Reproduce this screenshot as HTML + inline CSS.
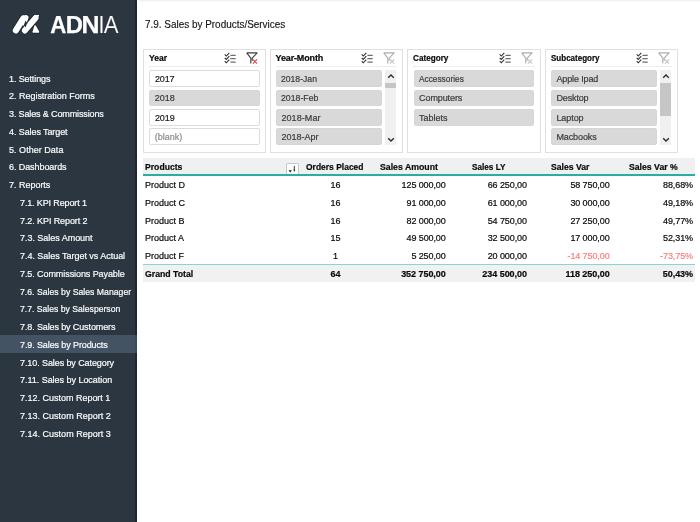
<!DOCTYPE html>
<html lang="en">
<head>
<meta charset="utf-8">
<title>7.9. Sales by Products/Services</title>
<style>
*{box-sizing:border-box;margin:0;padding:0}
html,body{width:700px;height:522px;overflow:hidden;background:#fff}
body{position:relative;font-family:"Liberation Sans",sans-serif;font-size:9px;color:#222}
#wrap{position:absolute;left:0;top:0;width:700px;height:522px;overflow:hidden;will-change:transform}
#topshade{position:absolute;left:138.5px;top:0;width:561.5px;height:2px;background:linear-gradient(#f1f1f1 40%,#ffffff)}
#side{position:absolute;left:0;top:0;width:137px;height:522px;background:#2b3640}
#sel{position:absolute;left:0;top:335.2px;width:137px;height:17.5px;background:#435364}
#logo{position:absolute;left:0;top:0}
#edge{position:absolute;left:135px;top:0;width:2px;height:522px;background:#1f2832}
#edge2{position:absolute;left:135px;top:335.2px;width:2px;height:17.5px;background:#3a4a5c}
.t{position:absolute;white-space:nowrap;height:17px;line-height:17px;font-size:9px;color:#0a0a0a;-webkit-text-stroke:0.2px currentColor}
.nav{color:#fbfcfd;-webkit-text-stroke:0.2px #fbfcfd}
.ttl{font-size:10.8px;height:20px;line-height:20px;color:#151515;-webkit-text-stroke:0.15px #151515}
.b{font-weight:bold;color:#0a0a0a}
.r{text-align:right}
.ctr{text-align:center}
.neg{color:#f57f7f}
.slicer{position:absolute;top:49px;height:103.5px;border:1px solid #e0e0e0;background:#fff}
.sep{position:absolute;top:66.3px;height:1px;background:#ededed}
.it{position:absolute;height:16.7px;border-radius:2px;background:#d9d9d9;border:1px solid #d6d6d6}
.it.off,.it.none{background:#fff;border:1px solid #dcdcdc}
.si{color:#3a3a3a}
.si.off{color:#1a1a1a}
.si.none{color:#8c8c8c}
.ico{position:absolute}
.sb{position:absolute;top:70px;width:11.5px;height:75px;background:#f0f0f0}
.th{position:absolute;width:11.5px;background:#c6c6c6}
#thead{position:absolute;left:143px;top:157.7px;width:552px;height:17.5px;background:#f0f0f0}
#tline{position:absolute;left:143px;top:174.4px;width:552px;height:1.6px;background:#25b0a2}
#total{position:absolute;left:143px;top:264.8px;width:552px;height:17.2px;background:#f1f1f1}
#totline{position:absolute;left:143px;top:264.2px;width:552px;height:1px;background:#8ad4d4}
#fbtn{position:absolute;left:286.3px;top:163px;width:12.3px;height:11.3px;border:1px solid #c4c8ce;border-bottom:none;background:#fdfdfd;border-radius:1.5px 1.5px 0 0}
#fbtn svg{position:absolute;left:0;top:0}
</style>
</head>
<body>
<div id="wrap">
<div id="topshade"></div>
<div id="side"></div><div id="sel"></div><div id="edge"></div><div id="edge2"></div>
<svg id="logo" width="137" height="50" viewBox="0 0 137 50">
<g fill="none" stroke-linecap="round" stroke-linejoin="round">
<path d="M15.9 30.4 L23.2 18.6" stroke="#1a232c" stroke-width="7.6"/>
<path d="M23.2 16.6 L26.6 16.2 Q27.8 16.6 27.4 17.8 L25.6 22.5 L23.6 24.5 Z" fill="#1a232c" stroke="#1a232c" stroke-width="3.6"/>
<path d="M15.9 30.4 L23.2 18.6" stroke="#ffffff" stroke-width="6.2"/>
<path d="M23.2 16.6 L26.6 16.2 Q27.8 16.6 27.4 17.8 L25.6 22.5 L23.6 24.5 Z" fill="#ffffff" stroke="#ffffff" stroke-width="2.2"/>
<path d="M24.8 30.5 L35.6 18" stroke="#1a232c" stroke-width="7.5"/>
<path d="M34 17 L38.3 15.5 L36.5 19 Z" fill="#1a232c" stroke="#1a232c" stroke-width="3"/>
<path d="M35.1 26 L38.5 32 L33.2 32 Z" fill="#1a232c" stroke="#1a232c" stroke-width="3"/>
<path d="M35.1 26 L38.5 32 L33.2 32 Z" fill="#ffffff" stroke="#ffffff" stroke-width="1.6"/>
<path d="M24.8 30.5 L35.6 18" stroke="#ffffff" stroke-width="5.9"/>
<path d="M34 17 L38.3 15.5 L36.5 19 Z" fill="#ffffff" stroke="#ffffff" stroke-width="1.6"/>
<path d="M25.6 20.5 L27.1 23.3 L25.4 27.6 L24.2 24.2 Z" fill="#1f2932"/>
</g>
<g font-family="Liberation Sans, sans-serif" font-size="23.2" fill="#ffffff">
<g font-weight="bold" stroke="#ffffff" stroke-width="0.25">
<text x="50.2" y="32.8" textLength="16.1" lengthAdjust="spacingAndGlyphs">A</text>
<text x="65.7" y="32.8" textLength="17.2" lengthAdjust="spacingAndGlyphs">D</text>
<text x="81.6" y="32.8" textLength="18" lengthAdjust="spacingAndGlyphs">N</text>
</g>
<text x="98.3" y="32.8" stroke="#2b3640" stroke-width="0.15">I</text>
<text x="103.8" y="32.8" stroke="#2b3640" stroke-width="0.15" textLength="14.8" lengthAdjust="spacingAndGlyphs">A</text>
</g>
</svg>
<div class="slicer" style="left:143px;width:123px"></div>
<div class="sep" style="left:149px;width:111px"></div>
<div class="it off" style="left:149px;top:70px;width:110.5px"></div>
<div class="it " style="left:149px;top:89.5px;width:110.5px"></div>
<div class="it off" style="left:149px;top:109px;width:110.5px"></div>
<div class="it none" style="left:149px;top:128.3px;width:110.5px"></div>
<svg class="ico" style="left:223.7px;top:52px" width="13" height="12" viewBox="0 0 13 12"><g fill="none" stroke="#2c2c2c" stroke-width="1.05"><path d="M0.7 2.4L2.3 4.0L5.3 0.8"/><path d="M0.7 5.8L2.3 7.4L5.3 4.2"/><path d="M0.7 9.2L2.3 10.8L5.3 7.6"/><path d="M6.4 3.3H11.7M6.4 6.7H11.7M6.4 10.1H11.7" stroke="#6c6c6c" stroke-width="1.3"/></g></svg>
<svg class="ico" style="left:245.5px;top:52px" width="14" height="13" viewBox="0 0 14 13"><g fill="none"><path d="M0.7 0.9H11.1L6.2 6.1V8.8M0.7 0.9L4.8 6.1V11.5" stroke="#3c3c3c" stroke-width="1.1" stroke-linejoin="round"/><path d="M6.9 7.4L11.1 11.6M11.1 7.4L6.9 11.6" stroke="#f03c3c" stroke-width="1.05"/></g></svg>
<div class="slicer" style="left:270px;width:133px"></div>
<div class="sep" style="left:276px;width:121px"></div>
<div class="it " style="left:276px;top:70px;width:106px"></div>
<div class="it " style="left:276px;top:89.5px;width:106px"></div>
<div class="it " style="left:276px;top:109px;width:106px"></div>
<div class="it " style="left:276px;top:128.3px;width:106px"></div>
<svg class="ico" style="left:361.0px;top:52px" width="13" height="12" viewBox="0 0 13 12"><g fill="none" stroke="#2c2c2c" stroke-width="1.05"><path d="M0.7 2.4L2.3 4.0L5.3 0.8"/><path d="M0.7 5.8L2.3 7.4L5.3 4.2"/><path d="M0.7 9.2L2.3 10.8L5.3 7.6"/><path d="M6.4 3.3H11.7M6.4 6.7H11.7M6.4 10.1H11.7" stroke="#6c6c6c" stroke-width="1.3"/></g></svg>
<svg class="ico" style="left:382.8px;top:52px" width="14" height="13" viewBox="0 0 14 13"><g fill="none"><path d="M0.7 0.9H11.1L6.2 6.1V8.8M0.7 0.9L4.8 6.1V11.5" stroke="#acacac" stroke-width="1.1" stroke-linejoin="round"/><path d="M6.9 7.4L11.1 11.6M11.1 7.4L6.9 11.6" stroke="#c2c2c2" stroke-width="1.05"/></g></svg>
<div class="sb" style="left:384.7px"></div><div class="th" style="left:384.7px;top:82.9px;height:5.6px"></div>
<svg class="ico" style="left:386.7px;top:73px" width="8" height="6" viewBox="0 0 8 6"><path d="M1.2 4.8L4 2L6.8 4.8" fill="none" stroke="#2a2a2a" stroke-width="1.3"/></svg>
<svg class="ico" style="left:386.7px;top:137px" width="8" height="6" viewBox="0 0 8 6"><path d="M1.2 1.2L4 4L6.8 1.2" fill="none" stroke="#2a2a2a" stroke-width="1.3"/></svg>
<div class="slicer" style="left:407px;width:134px"></div>
<div class="sep" style="left:413px;width:122px"></div>
<div class="it " style="left:413.8px;top:70px;width:120.4px"></div>
<div class="it " style="left:413.8px;top:89.5px;width:120.4px"></div>
<div class="it " style="left:413.8px;top:109px;width:120.4px"></div>
<svg class="ico" style="left:498.7px;top:52px" width="13" height="12" viewBox="0 0 13 12"><g fill="none" stroke="#2c2c2c" stroke-width="1.05"><path d="M0.7 2.4L2.3 4.0L5.3 0.8"/><path d="M0.7 5.8L2.3 7.4L5.3 4.2"/><path d="M0.7 9.2L2.3 10.8L5.3 7.6"/><path d="M6.4 3.3H11.7M6.4 6.7H11.7M6.4 10.1H11.7" stroke="#6c6c6c" stroke-width="1.3"/></g></svg>
<svg class="ico" style="left:520.5px;top:52px" width="14" height="13" viewBox="0 0 14 13"><g fill="none"><path d="M0.7 0.9H11.1L6.2 6.1V8.8M0.7 0.9L4.8 6.1V11.5" stroke="#acacac" stroke-width="1.1" stroke-linejoin="round"/><path d="M6.9 7.4L11.1 11.6M11.1 7.4L6.9 11.6" stroke="#c2c2c2" stroke-width="1.05"/></g></svg>
<div class="slicer" style="left:545px;width:133px"></div>
<div class="sep" style="left:551px;width:121px"></div>
<div class="it " style="left:551px;top:70px;width:106px"></div>
<div class="it " style="left:551px;top:89.5px;width:106px"></div>
<div class="it " style="left:551px;top:109px;width:106px"></div>
<div class="it " style="left:551px;top:128.3px;width:106px"></div>
<svg class="ico" style="left:636.0px;top:52px" width="13" height="12" viewBox="0 0 13 12"><g fill="none" stroke="#2c2c2c" stroke-width="1.05"><path d="M0.7 2.4L2.3 4.0L5.3 0.8"/><path d="M0.7 5.8L2.3 7.4L5.3 4.2"/><path d="M0.7 9.2L2.3 10.8L5.3 7.6"/><path d="M6.4 3.3H11.7M6.4 6.7H11.7M6.4 10.1H11.7" stroke="#6c6c6c" stroke-width="1.3"/></g></svg>
<svg class="ico" style="left:657.8px;top:52px" width="14" height="13" viewBox="0 0 14 13"><g fill="none"><path d="M0.7 0.9H11.1L6.2 6.1V8.8M0.7 0.9L4.8 6.1V11.5" stroke="#acacac" stroke-width="1.1" stroke-linejoin="round"/><path d="M6.9 7.4L11.1 11.6M11.1 7.4L6.9 11.6" stroke="#c2c2c2" stroke-width="1.05"/></g></svg>
<div class="sb" style="left:659.7px"></div><div class="th" style="left:659.7px;top:83px;height:33px"></div>
<svg class="ico" style="left:661.7px;top:73px" width="8" height="6" viewBox="0 0 8 6"><path d="M1.2 4.8L4 2L6.8 4.8" fill="none" stroke="#2a2a2a" stroke-width="1.3"/></svg>
<svg class="ico" style="left:661.7px;top:137px" width="8" height="6" viewBox="0 0 8 6"><path d="M1.2 1.2L4 4L6.8 1.2" fill="none" stroke="#2a2a2a" stroke-width="1.3"/></svg>
<div id="thead"></div><div id="tline"></div><div id="total"></div><div id="totline"></div>
<div id="fbtn"><svg width="11" height="11" viewBox="0 0 11 11"><path d="M1.5 6.2H4.9L3.2 8.4Z" fill="#222"/><path d="M7.3 1.9V7.4" stroke="#222" stroke-width="0.9" fill="none"/><path d="M6.5 5.6H8.1L7.3 7.6Z" fill="#222"/></svg></div>
<div id="n0" class="t nav" style="left:9px;top:71px;letter-spacing:-0.11px">1. Settings</div>
<div id="n1" class="t nav" style="left:9px;top:88px;letter-spacing:-0.02px">2. Registration Forms</div>
<div id="n2" class="t nav" style="left:9px;top:106px;letter-spacing:-0.13px">3. Sales &amp; Commissions</div>
<div id="n3" class="t nav" style="left:9px;top:124px;letter-spacing:-0.09px">4. Sales Target</div>
<div id="n4" class="t nav" style="left:9px;top:142px;letter-spacing:0.03px">5. Other Data</div>
<div id="n5" class="t nav" style="left:9px;top:159px;letter-spacing:-0.08px">6. Dashboards</div>
<div id="n6" class="t nav" style="left:9px;top:177px;letter-spacing:-0.02px">7. Reports</div>
<div id="n7" class="t nav" style="left:20px;top:195px;letter-spacing:-0.13px">7.1. KPI Report 1</div>
<div id="n8" class="t nav" style="left:20px;top:213px;letter-spacing:-0.09px">7.2. KPI Report 2</div>
<div id="n9" class="t nav" style="left:20px;top:230px;letter-spacing:-0.03px">7.3. Sales Amount</div>
<div id="n10" class="t nav" style="left:20px;top:248px;letter-spacing:-0.03px">7.4. Sales Target vs Actual</div>
<div id="n11" class="t nav" style="left:20px;top:266px;letter-spacing:-0.08px">7.5. Commissions Payable</div>
<div id="n12" class="t nav" style="left:20px;top:284px;transform:scaleX(0.966);transform-origin:0 50%">7.6. Sales by Sales Manager</div>
<div id="n13" class="t nav" style="left:20px;top:301px;transform:scaleX(0.959);transform-origin:0 50%">7.7. Sales by Salesperson</div>
<div id="n14" class="t nav" style="left:20px;top:319px;letter-spacing:-0.12px">7.8. Sales by Customers</div>
<div id="n15" class="t nav" style="left:20px;top:337px;letter-spacing:-0.11px">7.9. Sales by Products</div>
<div id="n16" class="t nav" style="left:20px;top:355px;letter-spacing:-0.09px">7.10. Sales by Category</div>
<div id="n17" class="t nav" style="left:20px;top:372px;letter-spacing:-0.03px">7.11. Sales by Location</div>
<div id="n18" class="t nav" style="left:20px;top:390px;letter-spacing:-0.01px">7.12. Custom Report 1</div>
<div id="n19" class="t nav" style="left:20px;top:408px;letter-spacing:0.01px">7.13. Custom Report 2</div>
<div id="n20" class="t nav" style="left:20px;top:426px;letter-spacing:0.01px">7.14. Custom Report 3</div>
<div id="title" class="t ttl" style="left:145.2px;top:14px;transform:scaleX(0.920);transform-origin:0 50%">7.9. Sales by Products/Services</div>
<div id="h0" class="t b" style="left:145.1px;top:159px;transform:scaleX(0.959);transform-origin:0 50%">Products</div>
<div id="h1" class="t b" style="left:306.1px;top:159px;transform:scaleX(0.942);transform-origin:0 50%">Orders Placed</div>
<div id="h2" class="t b" style="left:380.2px;top:159px;transform:scaleX(0.970);transform-origin:0 50%">Sales Amount</div>
<div id="h3" class="t b" style="left:472.2px;top:159px;transform:scaleX(0.910);transform-origin:0 50%">Sales LY</div>
<div id="h4" class="t b" style="left:551.0px;top:159px;transform:scaleX(0.959);transform-origin:0 50%">Sales Var</div>
<div id="h5" class="t b" style="left:629.1px;top:159px;transform:scaleX(0.965);transform-origin:0 50%">Sales Var %</div>
<div id="r0c0" class="t" style="left:145.1px;top:177px">Product D</div>
<div id="r0c1" class="t ctr" style="left:295.4px;width:80px;top:177px">16</div>
<div id="r0c2" class="t r num" style="right:254.3px;top:177px;letter-spacing:-0.09px">125 000,00</div>
<div id="r0c3" class="t r num" style="right:173.1px;top:177px;letter-spacing:-0.09px">66 250,00</div>
<div id="r0c4" class="t r num" style="right:90.4px;top:177px;letter-spacing:-0.09px">58 750,00</div>
<div id="r0c5" class="t r num" style="right:7.0px;top:177px;letter-spacing:-0.09px">88,68%</div>
<div id="r1c0" class="t" style="left:145.1px;top:195px">Product C</div>
<div id="r1c1" class="t ctr" style="left:295.4px;width:80px;top:195px">16</div>
<div id="r1c2" class="t r num" style="right:254.3px;top:195px;letter-spacing:-0.09px">91 000,00</div>
<div id="r1c3" class="t r num" style="right:173.1px;top:195px;letter-spacing:-0.09px">61 000,00</div>
<div id="r1c4" class="t r num" style="right:90.4px;top:195px;letter-spacing:-0.09px">30 000,00</div>
<div id="r1c5" class="t r num" style="right:7.0px;top:195px;letter-spacing:-0.09px">49,18%</div>
<div id="r2c0" class="t" style="left:145.1px;top:213px">Product B</div>
<div id="r2c1" class="t ctr" style="left:295.4px;width:80px;top:213px">16</div>
<div id="r2c2" class="t r num" style="right:254.3px;top:213px;letter-spacing:-0.09px">82 000,00</div>
<div id="r2c3" class="t r num" style="right:173.1px;top:213px;letter-spacing:-0.09px">54 750,00</div>
<div id="r2c4" class="t r num" style="right:90.4px;top:213px;letter-spacing:-0.09px">27 250,00</div>
<div id="r2c5" class="t r num" style="right:7.0px;top:213px;letter-spacing:-0.09px">49,77%</div>
<div id="r3c0" class="t" style="left:145.1px;top:230px">Product A</div>
<div id="r3c1" class="t ctr" style="left:295.4px;width:80px;top:230px">15</div>
<div id="r3c2" class="t r num" style="right:254.3px;top:230px;letter-spacing:-0.09px">49 500,00</div>
<div id="r3c3" class="t r num" style="right:173.1px;top:230px;letter-spacing:-0.09px">32 500,00</div>
<div id="r3c4" class="t r num" style="right:90.4px;top:230px;letter-spacing:-0.09px">17 000,00</div>
<div id="r3c5" class="t r num" style="right:7.0px;top:230px;letter-spacing:-0.09px">52,31%</div>
<div id="r4c0" class="t" style="left:145.1px;top:248px">Product F</div>
<div id="r4c1" class="t ctr" style="left:295.4px;width:80px;top:248px">1</div>
<div id="r4c2" class="t r num" style="right:254.3px;top:248px;letter-spacing:-0.09px">5 250,00</div>
<div id="r4c3" class="t r num" style="right:173.1px;top:248px;letter-spacing:-0.09px">20 000,00</div>
<div id="r4c4" class="t r num neg" style="right:90.4px;top:248px;letter-spacing:-0.09px">-14 750,00</div>
<div id="r4c5" class="t r num neg" style="right:7.0px;top:248px;letter-spacing:-0.09px">-73,75%</div>
<div id="r5c0" class="t b" style="left:145.1px;top:266px;transform:scaleX(0.969);transform-origin:0 50%">Grand Total</div>
<div id="r5c1" class="t ctr b" style="left:295.4px;width:80px;top:266px">64</div>
<div id="r5c2" class="t r num b" style="right:254.3px;top:266px;letter-spacing:-0.05px">352 750,00</div>
<div id="r5c3" class="t r num b" style="right:173.1px;top:266px;letter-spacing:-0.05px">234 500,00</div>
<div id="r5c4" class="t r num b" style="right:90.4px;top:266px;letter-spacing:-0.05px">118 250,00</div>
<div id="r5c5" class="t r num b" style="right:7.0px;top:266px;letter-spacing:-0.05px">50,43%</div>
<div id="s1h" class="t b sh" style="left:148.6px;top:50px;transform:scaleX(0.956);transform-origin:0 50%">Year</div>
<div id="s1i0" class="t si off" style="left:154.9px;top:71px;letter-spacing:-0.11px">2017</div>
<div id="s1i1" class="t si " style="left:154.7px;top:90px;letter-spacing:0.04px">2018</div>
<div id="s1i2" class="t si off" style="left:154.9px;top:110px;letter-spacing:-0.06px">2019</div>
<div id="s1i3" class="t si none" style="left:154.7px;top:129px">(blank)</div>
<div id="s2h" class="t b sh" style="left:275.5px;top:50px;letter-spacing:-0.13px">Year-Month</div>
<div id="s2i0" class="t si " style="left:281.4px;top:71px;transform:scaleX(0.957);transform-origin:0 50%">2018-Jan</div>
<div id="s2i1" class="t si " style="left:281.4px;top:90px;transform:scaleX(0.971);transform-origin:0 50%">2018-Feb</div>
<div id="s2i2" class="t si " style="left:281.4px;top:110px;letter-spacing:0.08px">2018-Mar</div>
<div id="s2i3" class="t si " style="left:281.4px;top:129px;letter-spacing:0.02px">2018-Apr</div>
<div id="s3h" class="t b sh" style="left:413.1px;top:50px;transform:scaleX(0.907);transform-origin:0 50%">Category</div>
<div id="s3i0" class="t si " style="left:419.1px;top:71px;transform:scaleX(0.923);transform-origin:0 50%">Accessories</div>
<div id="s3i1" class="t si " style="left:419.1px;top:90px;letter-spacing:-0.10px">Computers</div>
<div id="s3i2" class="t si " style="left:419.1px;top:110px;letter-spacing:-0.03px">Tablets</div>
<div id="s4h" class="t b sh" style="left:550.5px;top:50px;transform:scaleX(0.891);transform-origin:0 50%">Subcategory</div>
<div id="s4i0" class="t si " style="left:556.4px;top:71px;letter-spacing:-0.12px">Apple Ipad</div>
<div id="s4i1" class="t si " style="left:556.4px;top:90px;letter-spacing:-0.13px">Desktop</div>
<div id="s4i2" class="t si " style="left:556.4px;top:110px;letter-spacing:-0.07px">Laptop</div>
<div id="s4i3" class="t si " style="left:556.4px;top:129px;letter-spacing:-0.09px">Macbooks</div>
</div>
</body>
</html>
